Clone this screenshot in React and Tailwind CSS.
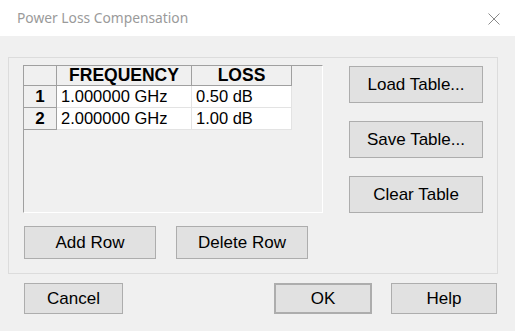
import React from 'react';

const rows = [
    { n: '1', freq: '1.000000 GHz', loss: '0.50 dB' },
    { n: '2', freq: '2.000000 GHz', loss: '1.00 dB' },
];

const Btn = ({ children, className = '' }) => (
    <button className={`flex items-center justify-center bg-[#e1e1e1] border border-[#adadad] text-black text-[17px] leading-none ${className}`}>
        {children}
    </button>
);

const App = () => {
    return (
        <div className="w-[515px] h-[331px] bg-[#f0f0f0] flex flex-col overflow-hidden" style={{ fontFamily: '"Liberation Sans", Arial, sans-serif' }}>
            {/* title bar */}
            <div className="h-[36px] bg-white flex items-center justify-between pl-[17px] pr-[15px] shrink-0">
                <span className="text-[13.8px] text-[#9a9a9a] font-['Noto_Sans',sans-serif]">Power Loss Compensation</span>
                <svg width="12" height="12" viewBox="0 0 12 12" className="mt-[1px]">
                    <path d="M0.5 0.5 L11.5 11.5 M11.5 0.5 L0.5 11.5" stroke="#8a8a8a" strokeWidth="1" fill="none" />
                </svg>
            </div>

            {/* group box */}
            <div className="mt-[21px] ml-[8px] w-[490px] h-[217px] border border-[#dcdcdc] pl-[14px] pt-[7px] flex gap-[26px]">
                <div className="flex flex-col">
                    <div className="w-[300px] h-[148px] border-t border-l border-[#a0a0a0] border-r-white border-b-white border-r border-b">
                        <div className="flex h-[20px] bg-[#f0f0f0]">
                            <div className="w-[33px] border-r border-b border-[#a0a0a0]" />
                            <div className="w-[135px] border-r border-b border-[#a0a0a0] flex items-center justify-center font-bold text-[17.5px]">FREQUENCY</div>
                            <div className="w-[100px] border-r border-b border-[#a0a0a0] flex items-center justify-center font-bold text-[17.5px]">LOSS</div>
                        </div>
                        {rows.map((r) => (
                            <div key={r.n} className="flex h-[22px]">
                                <div className="w-[33px] bg-[#f0f0f0] border-r border-b border-[#a0a0a0] flex items-center justify-center font-bold text-[17px]">{r.n}</div>
                                <div className="w-[135px] bg-white border-r border-b border-[#e3e3e3] flex items-center pl-[4px] text-[16.5px]">{r.freq}</div>
                                <div className="w-[100px] bg-white border-r border-b border-[#e3e3e3] flex items-center pl-[4px] text-[16.5px]">{r.loss}</div>
                            </div>
                        ))}
                    </div>
                    <div className="flex gap-[20px] mt-[13px] ml-[1px]">
                        <Btn className="w-[132px] h-[33px]">Add Row</Btn>
                        <Btn className="w-[132px] h-[33px]">Delete Row</Btn>
                    </div>
                </div>
                <div className="flex flex-col gap-[18px] pt-[1px]">
                    <Btn className="w-[134px] h-[37px]">Load Table...</Btn>
                    <Btn className="w-[134px] h-[37px]">Save Table...</Btn>
                    <Btn className="w-[134px] h-[37px]">Clear Table</Btn>
                </div>
            </div>

            {/* bottom buttons */}
            <div className="flex mt-[9px] pl-[24px]">
                <Btn className="w-[99px] h-[31px]">Cancel</Btn>
                <Btn className="w-[98px] h-[31px] ml-[151px] border-2 border-[#0078d7]">OK</Btn>
                <Btn className="w-[106px] h-[31px] ml-[19px]">Help</Btn>
            </div>
        </div>
    );
};

export default App;
